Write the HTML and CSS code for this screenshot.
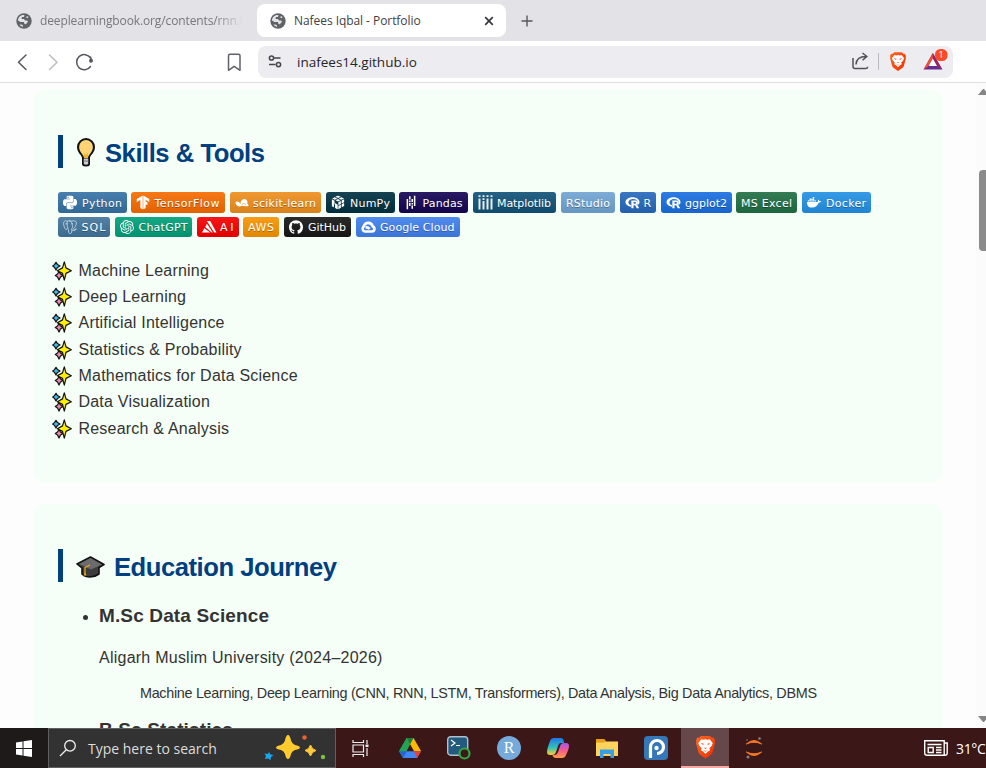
FILE: index.html
```html
<!DOCTYPE html>
<html lang="en">
<head>
<meta charset="utf-8">
<title>Nafees Iqbal - Portfolio</title>
<link rel="stylesheet" href="styles.css">
</head>
<body>
<svg class="defs" width="0" height="0">
  <defs>
    <linearGradient id="gloss" x2="0" y2="1"><stop offset="0" stop-color="#bbb" stop-opacity=".12"/><stop offset="1" stop-opacity=".12"/></linearGradient>
    <linearGradient id="lion" x2="1" y2="1"><stop offset="0" stop-color="#ff6a22"/><stop offset="1" stop-color="#f12b00"/></linearGradient>
    <symbol id="globe" viewBox="0 0 16 16"><circle cx="8" cy="8" r="7.7" fill="#5f6368"/><path d="M2 7.5C2 4.500 4.300 2 7.500 2l1 .2-.5 1.800H6L5.500 6H8l1 1.500h2l1 1.300-2.200 2.500-1.300-.3L8 9H4.500zM3.500 11.500l3 .2.600 2.200C5.500 13.700 4.300 12.800 3.500 11.500zM11 3l1.500 1-1 1.200-1.300-.6z" fill="#e3e2e7"/></symbol>
    <symbol id="brave" viewBox="0 0 20 24"><path d="M5.500 1h9l2 1.800 1.700-.2 1.500 2.800-.6 1.600.4 1.200-2.500 9.300c-.5 1.700-2.500 3-7 6-4.500-3-6.500-4.300-7-6L.5 8.200.9 7 .3 5.400l1.500-2.800 1.700.2z" fill="url(#lion)"/><path d="M5.800 4.300l2.200.4 2-.4 2 .4 2.200-.4 3 3.600-.8 2.500-2.400 2.800.4 2.200-2 1.200L10 19l-2.400-2.400-2-1.200.4-2.200-2.400-2.800-.8-2.500z" fill="#fff"/><path d="M5 8l3.300.8-.7 1.300zM15 8l-3.300.8.7 1.300zM8.500 12.800h3L10 14zM7.300 14.800l2.700 1.300 2.700-1.300-2.700 2z" fill="#fa4a16"/></symbol>
    <symbol id="sparkles" viewBox="0 0 20 20"><g stroke="#111" stroke-width="1.200" stroke-linejoin="round"><path d="M4 1.300l1.500 2.300L8 5 5.500 6.400 4 9 2.500 6.400.7 5l1.800-1.400z" fill="#3fbce8"/><path d="M7 10.500l1.500 2.500 2.400 1.500-2.400 1.500L7 19l-1.500-3-2.200-1.500L5.500 13z" fill="#e78bb5"/><path d="M12.300.9l1.700 6 5.300 2.800-5.300 2.700-1.700 6.800-1.800-6.800-5.200-2.700 5.200-2.800z" fill="#fff000"/></g></symbol>
    <symbol id="rlogo" viewBox="0 0 24 24"><path d="M12 3C5 3 0 6.800 0 11.300c0 4.200 4 7.300 9.500 8v-2.700C6.800 15.900 5 14 5 11.500 5 8.300 8.500 6 13 6s8 1.800 8 5c0 1.700-.8 2.700-1.700 3.300l1.900 2.100c1.800-1.300 2.800-3 2.800-5.100C24 6.800 19 3 12 3z" fill="#fff"/><path fill-rule="evenodd" d="M10 8.500h7.500c4 0 5 4.800 1.500 6.300l1 .9L23.500 22h-4.200L16.500 16.500h-2.700V22H10zm3.800 2.700V14h2.700c2 0 2-2.800 0-2.800z" fill="#fff"/></symbol>
  </defs>
</svg>

<header class="tabs">
  <div class="tab idle"><svg width="16" height="16"><use href="#globe"/></svg><span>deeplearningbook.org/contents/rnn.h</span></div>
  <div class="tab active"><svg width="16" height="16"><use href="#globe"/></svg><span>Nafees Iqbal - Portfolio</span>
    <svg class="close" width="10" height="10" viewBox="0 0 10 10"><path d="M1.200 1.200l7.600 7.600M8.800 1.200L1.200 8.800" stroke="#37373b" stroke-width="1.700"/></svg></div>
  <svg class="plus" width="12" height="12" viewBox="0 0 12 12"><path d="M6 .5v11M.5 6h11" stroke="#55585c" stroke-width="1.400"/></svg>
</header>

<nav class="toolbar">
  <svg width="250" height="40" viewBox="0 0 250 40" fill="none" stroke-linecap="round" stroke-linejoin="round">
    <path d="M26 14l-7.500 7.200L26 28.500" transform="translate(0 -1)" stroke="#55585c" stroke-width="1.500"/>
    <path d="M49.500 14l7.500 7.200-7.500 7.300" transform="translate(0 -1)" stroke="#bbbcbf" stroke-width="1.500"/>
    <path d="M90.600 16A7.600 7.600 0 1 0 90.500 24.500M90.500 15l1 3" stroke="#55585c" stroke-width="1.500"/><circle cx="91" cy="18.700" r="2" fill="#55585c"/>
    <path d="M230 12.200h8.500q1.500 0 1.500 1.500v14.600l-5.800-4-5.700 4V13.700q0-1.500 1.500-1.500z" stroke="#606268" stroke-width="1.500"/>
  </svg>
  <div class="omnibox">
    <svg width="14" height="13" viewBox="0 0 14 13" fill="none" stroke="#44464b" stroke-width="1.500"><circle cx="3.500" cy="3" r="2.100"/><path d="M6 3h6.500M1 9.600h6.500"/><circle cx="10.500" cy="9.600" r="2.100"/></svg>
    <span class="url">inafees14.github.io</span>
    <svg class="tools" width="98" height="26" viewBox="0 0 98 26">
      <path d="M3 9v8.500q0 2 2 2h11q1.700 0 1.700-1.700M6 15.500c.2-5.500 4-8 10-8M12.500 4l4.300 3.500-4.300 3.800" fill="none" stroke="#505258" stroke-width="1.500"/>
      <path d="M28.500 4v17" stroke="#b9b9be"/>
      <use href="#brave" x="39" y="2.500" width="18" height="20"/>
      <path d="M73.500 20.500L82.800 4l9.500 16.500z" fill="#6a2c91"/><path d="M82.800 4L73.500 20.500l4.500-3 4.800-8z" fill="#f0502b"/><path d="M82.800 4l9.500 16.500-5-3-4.500-8z" fill="#9e2262"/><path d="M78.600 17l4.200-7.600L87 17z" fill="#fff"/>
      <rect x="85" y="0" width="12.500" height="12" rx="5.300" fill="#fa4b27"/><text x="91.200" y="9" text-anchor="middle" class="count">1</text>
    </svg>
  </div>
</nav>

<main class="page">
  <div class="content">
    <section class="card skills">
      <h2><svg width="20" height="30" viewBox="0 0 20 30"><path d="M6 20c0-3-5-5-5-11a9 9 0 0 1 18 0c0 6-5 8-5 11v6q0 2.500-4 2.500T6 26z" fill="#111"/><path d="M8 20c0-3-4.900-6-4.900-11a6.900 6.900 0 0 1 13.800 0c0 5-4.900 8-4.900 11z" fill="#ffd474"/><path d="M8 15l2 2 2-2v5H8z" fill="#f1b32c"/><path d="M7.800 20.500h4.400V26q-2.200 1.500-4.400 0z" fill="#c9cdd0"/><path d="M7.500 23h5" stroke="#777"/></svg><span>Skills &amp; Tools</span></h2>

      <div class="badges">
        <svg class="badge tight" width="69" height="21"><rect width="69" height="21" rx="3" fill="#3776ab"/><rect width="69" height="21" rx="3" fill="url(#gloss)"/><svg x="5" y="3.500" width="14" height="14" viewBox="0 0 24 24"><path fill="#fff" d="M14.250.18l.9.2.73.26.59.3.45.32.34.34.25.34.16.33.1.3.04.26.02.2-.01.13V8.500l-.05.63-.13.55-.21.46-.26.38-.3.31-.33.25-.35.19-.35.14-.33.1-.3.07-.26.04-.21.02H8.770l-.69.05-.59.14-.5.22-.41.27-.33.32-.27.35-.2.36-.15.37-.1.35-.07.32-.04.27-.02.21v3.060H3.170l-.21-.03-.28-.07-.32-.12-.35-.18-.36-.26-.36-.36-.35-.46-.32-.59-.28-.73-.21-.88-.14-1.050-.05-1.230.06-1.220.16-1.040.24-.87.32-.71.36-.57.4-.44.42-.33.42-.24.4-.16.36-.1.32-.05.24-.01h8.380v-.83H6.180l-.01-2.750-.02-.37.05-.34.11-.31.17-.28.25-.26.31-.23.38-.2.44-.18.51-.15.58-.12.64-.1.71-.06.77-.04.84-.02 1.270.05zm-6.300 1.980l-.23.33-.08.41.08.41.23.34.33.22.41.09.41-.09.33-.22.23-.34.08-.41-.08-.41-.23-.33-.33-.22-.41-.09-.41.09zm13.090 3.950l.28.06.32.12.35.18.36.27.36.35.35.47.32.59.28.73.21.88.14 1.040.05 1.230-.06 1.230-.16 1.040-.24.86-.32.71-.36.57-.4.45-.42.33-.42.24-.4.16-.36.09-.32.05-.24.02-.16-.01h-8.220v.82h5.840l.01 2.760.02.36-.05.34-.11.31-.17.29-.25.25-.31.24-.38.2-.44.17-.51.15-.58.13-.64.09-.71.07-.77.04-.84.01-1.270-.04-1.070-.14-.9-.2-.73-.25-.59-.3-.45-.33-.34-.34-.25-.34-.16-.33-.1-.3-.04-.25-.02-.2.01-.13v-5.340l.05-.64.13-.54.21-.46.26-.38.3-.32.33-.24.35-.2.35-.14.33-.1.3-.06.26-.04.21-.02h5.970l.69-.05.59-.14.5-.21.41-.28.33-.32.27-.35.2-.36.15-.36.1-.35.07-.32.04-.28.02-.21V6.070h2.090l.14.01zm-6.470 14.250l-.23.33-.08.41.08.41.23.33.33.23.41.08.41-.08.33-.23.23-.33.08-.41-.08-.41-.23-.33-.33-.23-.41-.08-.41.08z"/></svg><text x="24" y="14.500" textLength="40">Python</text></svg>
        <svg class="badge" width="94" height="21"><rect width="94" height="21" rx="3" fill="#ff6f00"/><rect width="94" height="21" rx="3" fill="url(#gloss)"/><svg x="5" y="3.500" width="14" height="14" viewBox="0 0 24 24"><path fill="#fff" d="M1.292 5.856L11.540 0v24l-4.095-2.378V7.603l-6.168 3.564.015-5.310zm21.430 5.311l-.014-5.310L12.460 0v24l4.095-2.378V14.870l3.092 1.788-.018-4.618-3.074-1.756V7.603l6.168 3.564z"/></svg><text x="23.500" y="14.500" textLength="65">TensorFlow</text></svg>
        <svg class="badge" width="91" height="21"><rect width="91" height="21" rx="3" fill="#f7931e"/><rect width="91" height="21" rx="3" fill="url(#gloss)"/><svg x="5" y="3.500" width="14" height="14" viewBox="0 0 24 24"><path fill="#fff" d="M9.500 15C9 10 12 6 16 6s6.500 4 5 8.500c2 .5 2.500 2 2 3.500-2 .8-8 .7-12-.3C9.500 19.300 6 19 3.500 17 .8 15 .2 12.300 1.300 11c1.500-1.200 6.500-.5 8.200 4z"/><path d="M11.500 15.500c2-2 5-2 7 0" stroke="#e98c20" fill="none"/></svg><text x="23" y="14.500" textLength="63">scikit-learn</text></svg>
        <svg class="badge tight" width="69" height="21"><rect width="69" height="21" rx="3" fill="#013243"/><rect width="69" height="21" rx="3" fill="url(#gloss)"/><svg x="5" y="3.500" width="14" height="14" viewBox="0 0 24 24"><path fill="#fff" d="M12 0l4.500 2.200-4.300 2.200-4.600-2.200zM6.300 2.900l4.500 2.300-4.200 2.100L2 5zM17.800 3l4.500 2.200-4.700 2.200L13.300 5.200zM12 5.900l4.300 2.200L12 10.300 7.800 8.100zM1.500 6.500L6 8.800v3.700l5.500 3.200V24L7 21.500v-5l-2-4.300v8L1.500 18.500zM22.500 6.500v5l-4.200 2.200V8.700zM16.900 9.400v5l-4.300 2.300v-5.200zM22.500 13v5l-4.200 2.200v-5zM16.900 15.900V21l-4.300 2.500v-5.300z"/></svg><text x="24" y="14.500" textLength="40">NumPy</text></svg>
        <svg class="badge" width="69" height="21"><rect width="69" height="21" rx="3" fill="#150458"/><rect width="69" height="21" rx="3" fill="url(#gloss)"/><svg x="5" y="3.500" width="14" height="14" viewBox="0 0 24 24"><path fill="#fff" d="M16.922 0h2.623v18.104h-2.623zm-4.126 12.940h2.623v2.570h-2.623zm0-7.037h2.623v5.446h-2.623zm0 11.197h2.623v5.446h-2.623zM4.456 5.896h2.622V24H4.455zm4.213 2.559h2.623v2.570H8.670zm0 4.151h2.623v5.447H8.670zm0-11.187h2.623v5.446H8.670Z"/></svg><text x="23.500" y="14.500" textLength="40">Pandas</text></svg>
        <svg class="badge" width="83" height="21"><rect width="83" height="21" rx="3" fill="#11557c"/><rect width="83" height="21" rx="3" fill="url(#gloss)"/><path d="M6.500 7.500v11M10.500 10v8.500M14.500 7.500v11M18.500 7.500v11" transform="translate(0 -1)" stroke="#e7eef2" stroke-width="2"/><path d="M5.500 4.200h2m2 0h2m2 0h2m2 0h2M9.500 7.200h2" stroke="#e7eef2" stroke-width="1.800"/><text x="24" y="14.500" textLength="54">Matplotlib</text></svg>
        <svg class="badge" width="54" height="21"><rect width="54" height="21" rx="3" fill="#75aadb"/><rect width="54" height="21" rx="3" fill="url(#gloss)"/><text x="5" y="14.500" textLength="44">RStudio</text></svg>
        <svg class="badge" width="36" height="21"><rect width="36" height="21" rx="3" fill="#276dc3"/><rect width="36" height="21" rx="3" fill="url(#gloss)"/><use href="#rlogo" x="5" y="3.500" width="15" height="14"/><text x="23.500" y="14.500">R</text></svg>
        <svg class="badge tight" width="71" height="21"><rect width="71" height="21" rx="3" fill="#1a73e8"/><rect width="71" height="21" rx="3" fill="url(#gloss)"/><use href="#rlogo" x="5" y="3.500" width="15" height="14"/><text x="24" y="14.500" textLength="42">ggplot2</text></svg>
        <svg class="badge" width="61" height="21"><rect width="61" height="21" rx="3" fill="#217346"/><rect width="61" height="21" rx="3" fill="url(#gloss)"/><text x="5" y="14.500" textLength="51">MS Excel</text></svg>
        <svg class="badge" width="69" height="21"><rect width="69" height="21" rx="3" fill="#2496ed"/><rect width="69" height="21" rx="3" fill="url(#gloss)"/><svg x="5" y="3.500" width="14" height="14" viewBox="0 0 24 24"><path fill="#fff" d="M0 11h18.500c.2-2 0-3 1-4 1 .6 1.500 1.700 1.500 2.500 1-.2 2.200 0 3 .5-.7 1.800-2 2.300-4 2.300-2 5.500-5.500 8.200-11.500 8.200C2 20.500 0 16.500 0 11zM1.500 8h2.300v2.300H1.500zm2.800 0h2.400v2.300H4.300zM7.200 8h2.300v2.300H7.200zM10 8h2.400v2.300H10zm2.900 0h2.300v2.300h-2.300zM4.300 5.200h2.400v2.300H4.300zm2.900 0h2.300v2.300H7.200zm2.800 0h2.400v2.300H10zm0-2.800h2.400v2.300H10z"/></svg><text x="24" y="14.500" textLength="40">Docker</text></svg>
        <svg class="badge" width="52" height="20"><rect width="52" height="20" rx="3" fill="#4479a1"/><rect width="52" height="20" rx="3" fill="url(#gloss)"/><svg x="5" y="3" width="14" height="14" viewBox="0 0 24 24"><path fill="none" stroke="#d5e2ec" stroke-width="1.300" d="M8 2C3 0 .5 3 1 7c.3 3 2 8 3.500 9 2 1 3.500-2.500 3.500-2.500M8 2c-2 3-1 8 0 11l1 3 1 6c1 2.500 5 1 5-1.500V15M8 2c3-1.500 5-.5 7 0M15 15c2-2 1-5 1-7 0-3-2-6-5-6M15 2c4-2 8 0 8 3 0 4-3 8-5 10 0 2 4 1 5 0-1 3-5 4-8 2M4 7c1-1 3-1 4 0M14 7c1-1 2-1 3 0"/></svg><text x="23.500" y="14" textLength="24">SQL</text></svg>
        <svg class="badge" width="77" height="20"><rect width="77" height="20" rx="3" fill="#00a67e"/><rect width="77" height="20" rx="3" fill="url(#gloss)"/><svg x="5" y="3" width="14" height="14" viewBox="0 0 24 24"><path fill="#fff" d="M22.282 9.821a5.985 5.985 0 0 0-.516-4.911 6.046 6.046 0 0 0-6.510-2.900A6.065 6.065 0 0 0 4.981 4.182a5.985 5.985 0 0 0-3.998 2.900 6.046 6.046 0 0 0 .743 7.097 5.980 5.980 0 0 0 .511 4.911 6.051 6.051 0 0 0 6.515 2.900A5.985 5.985 0 0 0 13.260 24a6.056 6.056 0 0 0 5.772-4.206 5.989 5.989 0 0 0 3.998-2.900 6.056 6.056 0 0 0-.748-7.073zm-9.022 12.608a4.476 4.476 0 0 1-2.876-1.041l.142-.080 4.778-2.758a.795.795 0 0 0 .393-.681v-6.737l2.020 1.169a.071.071 0 0 1 .038.052v5.583a4.504 4.504 0 0 1-4.495 4.494zm-9.661-4.125a4.471 4.471 0 0 1-.535-3.014l.142.085 4.783 2.758a.771.771 0 0 0 .781 0l5.843-3.369v2.332a.080.080 0 0 1-.033.062L9.740 19.950a4.499 4.499 0 0 1-6.141-1.646zM2.341 7.896a4.485 4.485 0 0 1 2.366-1.973V11.600a.766.766 0 0 0 .388.677l5.814 3.354-2.020 1.169a.076.076 0 0 1-.071 0l-4.830-2.787A4.504 4.504 0 0 1 2.341 7.872zm16.596 3.856L13.104 8.364 15.119 7.200a.076.076 0 0 1 .071 0l4.830 2.791a4.494 4.494 0 0 1-.676 8.104v-5.677a.790.790 0 0 0-.407-.667zm2.011-3.023l-.142-.085-4.774-2.782a.776.776 0 0 0-.785 0L9.409 9.230V6.897a.066.066 0 0 1 .028-.061l4.830-2.787a4.499 4.499 0 0 1 6.680 4.660zM8.307 12.863l-2.020-1.164a.080.080 0 0 1-.038-.057V6.074a4.499 4.499 0 0 1 7.376-3.454l-.142.081L8.704 5.459a.795.795 0 0 0-.393.681zm1.098-2.365l2.602-1.500 2.607 1.500v2.999l-2.597 1.500-2.607-1.500Z"/></svg><text x="23.500" y="14" textLength="49">ChatGPT</text></svg>
        <svg class="badge tight" width="42" height="20"><rect width="42" height="20" rx="3" fill="#ff0000"/><rect width="42" height="20" rx="3" fill="url(#gloss)"/><path d="M5 15.500l2.300-4.300 6 4.300zM8.200 10l1.700-3.200 6 8.700h-1.200zM9.800 4h3.400l6.300 11.500h-2.300z" fill="#fff"/><text x="23" y="14" textLength="13.500">AI</text></svg>
        <svg class="badge" width="36" height="20"><rect width="36" height="20" rx="3" fill="#ff9900"/><rect width="36" height="20" rx="3" fill="url(#gloss)"/><text x="5" y="14" textLength="26">AWS</text></svg>
        <svg class="badge" width="67" height="20"><rect width="67" height="20" rx="3" fill="#181717"/><rect width="67" height="20" rx="3" fill="url(#gloss)"/><svg x="5" y="3" width="14" height="14" viewBox="0 0 24 24"><path fill="#fff" d="M12 .297c-6.630 0-12 5.373-12 12 0 5.303 3.438 9.800 8.205 11.385.6.113.82-.258.82-.577 0-.285-.01-1.040-.015-2.040-3.338.724-4.042-1.610-4.042-1.610C4.422 18.070 3.633 17.700 3.633 17.700c-1.087-.744.084-.729.084-.729 1.205.084 1.838 1.236 1.838 1.236 1.070 1.835 2.809 1.305 3.495.998.108-.776.417-1.305.76-1.605-2.665-.3-5.466-1.332-5.466-5.930 0-1.310.465-2.380 1.235-3.220-.135-.303-.54-1.523.105-3.176 0 0 1.005-.322 3.300 1.230.96-.267 1.980-.399 3-.405 1.020.006 2.040.138 3 .405 2.280-1.552 3.285-1.230 3.285-1.230.645 1.653.24 2.873.12 3.176.765.84 1.230 1.910 1.230 3.220 0 4.610-2.805 5.625-5.475 5.920.42.36.81 1.096.81 2.220 0 1.606-.015 2.896-.015 3.286 0 .315.21.69.825.57C20.565 22.092 24 17.592 24 12.297c0-6.627-5.373-12-12-12"/></svg><text x="24" y="14" textLength="38">GitHub</text></svg>
        <svg class="badge" width="104" height="20"><rect width="104" height="20" rx="3" fill="#4285f4"/><rect width="104" height="20" rx="3" fill="url(#gloss)"/><path fill="none" stroke="#fff" stroke-width="2.600" stroke-linejoin="round" d="M9 14.500a2.700 2.700 0 0 1-1.500-4.700c1.500-5.300 8.200-5 9.200-.3 2.800.8 2 5-.7 5zM9.500 10.500q2.500-.5 4 1.500"/><text x="24" y="14" textLength="74.500">Google Cloud</text></svg>
      </div>

      <ul class="sparkle">
        <li><svg width="20" height="20"><use href="#sparkles"/></svg>Machine Learning</li>
        <li><svg width="20" height="20"><use href="#sparkles"/></svg>Deep Learning</li>
        <li><svg width="20" height="20"><use href="#sparkles"/></svg>Artificial Intelligence</li>
        <li><svg width="20" height="20"><use href="#sparkles"/></svg>Statistics &amp; Probability</li>
        <li><svg width="20" height="20"><use href="#sparkles"/></svg>Mathematics for Data Science</li>
        <li><svg width="20" height="20"><use href="#sparkles"/></svg>Data Visualization</li>
        <li><svg width="20" height="20"><use href="#sparkles"/></svg>Research &amp; Analysis</li>
      </ul>
    </section>

    <section class="card education">
      <h2><svg width="29" height="24" viewBox="0 0 29 24"><path d="M14.500 2L28 9.500l-5 3v6.500q-4 3-9 3t-8-3V13L1 9z" fill="#3d3d3d" stroke="#111" stroke-width="1.600" stroke-linejoin="round"/><path d="M14.500 3L26 9.500 15 14.500 3 9z" fill="#6b6b6b"/><path d="M14 10l-5 2.500v6" fill="none" stroke="#f1a81c" stroke-width="1.200"/><path d="M9 17l1.500 3.500H7.500z" fill="#f1a81c"/></svg><span>Education Journey</span></h2>
      <ul class="degrees">
        <li><h3>M.Sc Data Science</h3><p>Aligarh Muslim University (2024–2026)</p><p class="topics">Machine Learning, Deep Learning (CNN, RNN, LSTM, Transformers), Data Analysis, Big Data Analytics, DBMS</p></li>
        <li><h3>B.Sc Statistics</h3></li>
      </ul>
    </section>
  </div>
  <div class="scrollbar"><i class="up"></i><i class="thumb"></i><i class="down"></i></div>
</main>

<footer class="taskbar">
  <div class="start"><svg width="16" height="17" viewBox="0 0 16 17"><path d="M0 2.500L6.500 1.500V8H0zM7.500 1.300L16 0v8H7.500zM0 9h6.500v6.500L0 14.500zM7.500 9H16v8L7.500 15.700z" fill="#fff"/></svg></div>
  <div class="search">
    <svg width="18" height="18" viewBox="0 0 18 18"><circle cx="11" cy="6.800" r="5.300" fill="none" stroke="#eee" stroke-width="1.300"/><path d="M7.300 10.700L1 17" stroke="#eee" stroke-width="1.300"/></svg>
    <span>Type here to search</span>
    <svg class="stars" width="62" height="26" viewBox="0 0 62 26"><path d="M24 0q2 0 3 5.500Q28 9 31 10q5 1 5 2.500T31 15q-3 1-4 4-1 5-3 5t-3-5q-1-3-4-4-5-1-5-2.500t5-2.500q3-1 4-4.500Q22 0 24 0z" fill="#ffcb2d"/><path d="M46.500 10q1.500 4.500 5.500 5.500-4 1-5.500 5.500-1.500-4.500-5.500-5.500 4-1 5.500-5.500z" fill="#ffc83d" stroke="#ffc83d"/><path d="M5 17l1.500 2.500 3 .5-2.500 2-.5 3-2.500-1.500L1 24l1-3-1.500-2.500L4 19z" fill="#18a8ef"/><circle cx="40.500" cy="2.500" r="2.200" fill="#f0602d"/><circle cx="59" cy="22" r="2.200" fill="#7ac142"/></svg>
  </div>
  <div class="app"><svg width="18" height="17" viewBox="0 0 18 17" fill="none" stroke="#eee" stroke-width="1.200"><path d="M1 0v2.500h10.500V0M1 17v-2.500h10.500V17M1 5h10.500v7H1zM15 0v4M15 8v8"/><path d="M13.500 4.500h3v2.500h-3z" fill="#eee" stroke="none"/></svg></div>
  <div class="app"><svg width="22" height="20" viewBox="0 0 22 20"><path d="M7.500 0h7L4 20 0 13z" fill="#23a455"/><path d="M7.500 0h7L22 13h-7z" fill="#ffba00"/><path d="M7.500 0h7L11 6.500z" fill="#188038"/><path d="M4 13.200h18L18 20H4z" fill="#4285f4"/><path d="M15 13.200h7L18 20z" fill="#ea4335"/><path d="M4 20l4-6.800H0z" fill="#2466d1"/></svg></div>
  <div class="app"><svg width="24" height="24" viewBox="0 0 24 24"><rect x=".7" y=".7" width="20" height="18.500" rx="3" fill="#235b7e" stroke="#aec1cc" stroke-width="1.400"/><path d="M4 4l4 3-4 3M9 9.500h4" stroke="#fff" stroke-width="1.200" fill="none"/><circle cx="17.500" cy="17.500" r="5" fill="#3b1b18" stroke="#37a446" stroke-width="2.200"/></svg></div>
  <div class="app"><svg width="24" height="24" viewBox="0 0 24 24"><circle cx="12" cy="12" r="12" fill="#75aadb"/><text x="12" y="17" text-anchor="middle" class="rtext">R</text></svg></div>
  <div class="app"><svg width="22" height="20" viewBox="0 0 22 20"><defs><linearGradient id="ca" x2="0" y2="1"><stop stop-color="#2274e9"/><stop offset=".55" stop-color="#2cc0bf"/><stop offset="1" stop-color="#ffcf2e"/></linearGradient><linearGradient id="cb" x2="0" y2="1"><stop stop-color="#a457ed"/><stop offset=".5" stop-color="#f55b8d"/><stop offset="1" stop-color="#ff9c42"/></linearGradient></defs><path d="M7 0h7q2 0 2.500 2L17 5h-3q-2 0-2.700 2.200L9 14q-1 3-4 3H3q-3 0-3-3 0-3 3-11Q4 0 7 0z" fill="url(#ca)"/><path d="M19 5q3 0 3 3 0 3-3 9-1 3-4 3H9q-3 0-3.500-3H8q2 0 3-3l2.500-7Q14.300 5 17 5z" fill="url(#cb)"/></svg></div>
  <div class="app"><svg width="22" height="19" viewBox="0 0 22 19"><path d="M0 0h8l2 2.500h12V17H0z" fill="#ffd35c"/><path d="M0 0h8l2 2.500-2 1H0z" fill="#e8a010"/><path d="M4 19v-8.500h14V19h-3.500v-4h-7v4z" fill="#389ee5"/></svg></div>
  <div class="app"><svg width="24" height="24" viewBox="0 0 24 24"><rect width="24" height="24" rx="4" fill="#3577b8"/><path d="M6.500 22V11a6.500 6.500 0 1 1 6.500 6.500" fill="none" stroke="#fff" stroke-width="3.200"/><circle cx="12.500" cy="12" r="2.200" fill="#fff"/></svg></div>
  <div class="app current"><svg width="21" height="24"><use href="#brave"/></svg></div>
  <div class="app"><svg width="18" height="22" viewBox="0 0 18 22"><path d="M1.300 7q7.700-7 15.400 0Q9 3.500 1.300 7zM1.300 15q7.700 7 15.400 0-7.700 3.500-15.400 0z" fill="#f37726" stroke="#f37726"/><circle cx="14.500" cy="1.500" r="1.300" fill="#8a8080"/><circle cx="3" cy="20" r="1.500" fill="#8a8080"/><circle cx="2" cy="3" r=".8" fill="#8a8080"/></svg></div>
  <div class="weather"><svg width="24" height="16" viewBox="0 0 24 16" fill="none" stroke="#fff" stroke-width="1.400"><path d="M.7.700h19.500v14.600H3Q.7 15.300.7 13zM20.200 3h3v10q0 2.300-2.300 2.300h-2M3.500 4.500h14M12 7.500h5.500M12 10h5.500M12 12.500h5.500"/><path d="M4.200 7.500h5v5h-5z"/></svg><span>31°C</span></div>
</footer>
</body>
</html>
```
FILE: styles.css
```css
* { box-sizing: border-box; }
body { margin: 0; width: 986px; height: 768px; overflow: hidden; display: flex; flex-direction: column; background: #fff; font-family: "Liberation Sans", Arial, sans-serif; color: #333; }
svg { display: block; flex: none; }
.defs { position: absolute; }
ul, h2, h3, p { margin: 0; padding: 0; }

.tabs { flex: none; height: 41px; background: #e3e2e7; display: flex; align-items: center; font: 12px "Open Sans", "Noto Sans", sans-serif; }
.tab { display: flex; align-items: center; white-space: nowrap; }
.idle { width: 257px; padding-left: 16px; gap: 8px; color: #77777b; letter-spacing: -.12px; }
.idle span { width: 203px; overflow: hidden; -webkit-mask-image: linear-gradient(90deg, #000 86%, transparent); mask-image: linear-gradient(90deg, #000 86%, transparent); }
.active { width: 249px; height: 33px; padding: 0 12px 0 13px; gap: 8px; background: #fff; border-radius: 8px; color: #414145; letter-spacing: -.06px; }
.close { margin-left: auto; }
.plus { margin-left: 15px; }

.toolbar { flex: none; height: 42px; border-bottom: 1px solid #dfdee2; background: #fff; display: flex; align-items: center; }
.omnibox { width: 695px; height: 32px; margin-left: 8px; padding-left: 10px; background: #edecf1; border-radius: 8px; display: flex; align-items: center; }
.url { margin-left: 15px; font: 13.5px "Open Sans", "Noto Sans", sans-serif; color: #26262a; }
.tools { margin-left: auto; margin-right: 5px; }
.count { font: 9px "Open Sans", sans-serif; fill: #fff; }

.page { height: 645px; flex: none; display: flex; overflow: hidden; background: #fdfdfd; }
.content { width: 910px; margin-left: 33px; padding-top: 6px; display: flex; flex-direction: column; gap: 21px; flex: none; }
.card { flex: none; background: #f5fff7; border-radius: 12px; padding: 45px 25px 0; }
.skills { height: 394px; padding-top: 46px; }
.education { height: 400px; }
h2 { height: 33px; border-left: 5px solid #004080; padding: 2px 0 0 13px; display: flex; align-items: center; gap: 9px; font-size: 25.6px; line-height: 33px; letter-spacing: -.46px; color: #004080; white-space: nowrap; }
h2 span { position: relative; top: 1px; }
.badges { margin-top: 24px; display: flex; flex-wrap: wrap; align-items: flex-start; gap: 4px 5px; }
.tight { margin-right: -1px; }
.badge text { font: 11px "DejaVu Sans", Verdana, sans-serif; fill: #fff; text-shadow: 0 1px 0 rgba(1, 1, 1, .3); }
.sparkle { list-style: none; margin: 20.6px 0 0 -6px; }
.sparkle li { height: 26.35px; display: flex; align-items: center; gap: 6.5px; font-size: 16px; letter-spacing: .21px; white-space: nowrap; }
.degrees { padding-left: 41px; margin-top: 21px; }
.degrees li { font-size: 16px; height: 114px; }
h3 { font-size: 19px; line-height: 26px; letter-spacing: .13px; }
.degrees p { margin-top: 16px; line-height: 25px; letter-spacing: .24px; }
.degrees .topics { margin: 12px 0 0 41px; font-size: 14.4px; line-height: 23px; letter-spacing: -.31px; white-space: nowrap; }

.scrollbar { width: 10px; margin-left: auto; flex: none; display: flex; flex-direction: column; background: #fbfbfb; overflow: hidden; }
.scrollbar i { flex: none; }
.up { margin: 6px 0 0 2px; border: 5.5px solid transparent; border-top: 0; border-bottom: 6px solid #858585; width: 11px; }
.thumb { margin: 75px 0 0 3px; width: 8px; height: 81px; border-radius: 4px 0 0 4px; background: #8b8b8b; }
.down { margin: auto 0 6px 2px; border: 5.5px solid transparent; border-bottom: 0; border-top: 6px solid #858585; width: 11px; }

.taskbar { flex: none; height: 40px; display: flex; background: #3b1717; font-family: "Open Sans", "Noto Sans", sans-serif; overflow: hidden; }
.start { width: 48px; background: #1e1a1a; display: grid; place-items: center; }
.search { width: 288px; border: 1px solid #606060; background: #323232; display: flex; align-items: center; padding: 0 9px 0 10px; color: #ddd; font-size: 14px; }
.search span { margin-left: 11px; white-space: nowrap; }
.stars { margin-left: auto; }
.app { width: 49.3px; flex: none; display: grid; place-items: center; }
.current { background: #66484a; border-bottom: 2px solid #f5a9a5; width: 48px; }
.rtext { font: 16px "Liberation Serif", serif; fill: #fff; }
.weather { margin-left: auto; width: 62px; flex: none; display: flex; align-items: center; gap: 8px; color: #fff; font-size: 14px; letter-spacing: -.35px; white-space: nowrap; }
```
